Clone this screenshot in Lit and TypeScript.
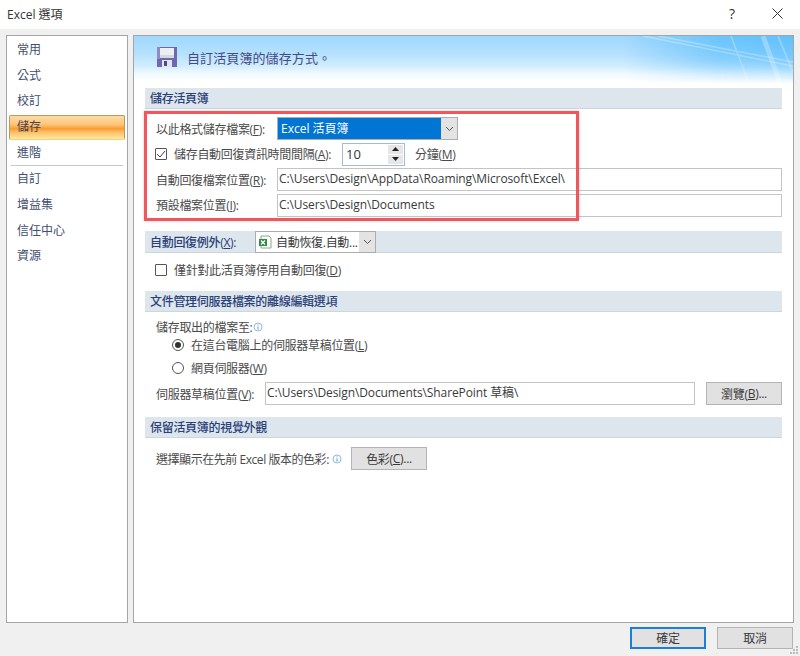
import { LitElement, html, css, svg } from 'lit'
import { customElement } from 'lit/decorators.js'

const NAV_TOP = ['常用', '公式', '校訂', '儲存', '進階']
const NAV_BOTTOM = ['自訂', '增益集', '信任中心', '資源']

const chevron = html`<svg width="9" height="6" viewBox="0 0 9 6"><path d="M1 1l3.5 3.5L8 1" fill="none" stroke="#555" stroke-width="1"/></svg>`

const info = html`<svg class="info" width="10" height="10" viewBox="0 0 10 10"><circle cx="5" cy="5" r="4" fill="#fff" stroke="#8dbbe6"/><path d="M5 2.5v1M5 4.5v3" stroke="#5a97d0" stroke-width="1"/></svg>`

@customElement('app-root')
export class AppRoot extends LitElement {
  static styles = css`
    :host {
      display: block;
      position: relative;
      width: 800px;
      height: 656px;
      background: #f0f0f0;
      color: #4a4a4a;
      font-family: 'Open Sans', 'Noto Sans CJK TC', sans-serif;
      font-size: 12px;
      letter-spacing: -0.3px;
      overflow: hidden;
    }
    u { text-underline-offset: 1px; }
    .titlebar {
      height: 29px;
      background: #fff;
      display: flex;
      align-items: center;
      padding: 0 17px 2px 7px;
      box-sizing: border-box;
      color: #333;
      letter-spacing: 0;
    }
    .titlebar .name { flex: 1; }
    .help { font-size: 14px; width: 20px; margin-right: 30px; text-align: center; color: #333; }
    .body {
      display: flex;
      gap: 5px;
      padding: 6px 6px 0;
      height: 594px;
      box-sizing: border-box;
    }
    .nav {
      width: 122px;
      box-sizing: border-box;
      background: #fff;
      border: 1px solid #a5a5a5;
      padding: 1px 2px;
      color: #414e70;
      letter-spacing: 0;
    }
    .nav-item {
      height: 25.6px;
      line-height: 25px;
      padding-left: 8px;
    }
    .nav-item.on {
      background: linear-gradient(#fbdca8 0, #fdc477 38%, #fb9c30 55%, #fdc26c 72%, #fee9a0 100%);
      border: 1px solid #bd9a5c;
      border-bottom-color: #f2d272;
      height: 23px;
      line-height: 22px;
      padding-left: 7px;
      margin: 1px 0 0;
      color: #44434f;
      border-radius: 2px;
    }
    .nav hr {
      border: 0;
      border-top: 1px solid #c3c7cc;
      margin: 0 2px;
    }
    .panel {
      position: relative;
      width: 661px;
      box-sizing: border-box;
      border: 1px solid #a5a5a5;
      background: linear-gradient(#9fd8fd 0, #b5e1fd 18px, #d2edfe 30px, #f2faff 38px, #fff 46px);
      padding: 0 11px;
    }
    .banner-art { position: absolute; right: 0; top: 0; }
    .banner {
      position: relative;
      display: flex;
      align-items: center;
      gap: 10px;
      height: 52px;
      padding: 0 0 10px 12px;
      box-sizing: border-box;
      font-size: 13px;
      color: #454b82;
      letter-spacing: 0.1px;
    }
    .head {
      position: relative;
      height: 21px;
      box-sizing: border-box;
      background: #dde6ec;
      border-bottom: 1px solid #ccd6dd;
      padding-left: 5px;
      display: flex;
      align-items: center;
      gap: 10px;
      font-weight: 500;
      color: #2b3f78;
    }
    .head.tall { height: 22px; }
    .row {
      display: flex;
      align-items: center;
      height: 25.5px;
      padding-left: 11px;
    }
    .label { width: 121px; flex: none; }
    .field {
      flex: 1;
      height: 23px;
      box-sizing: border-box;
      background: #fff;
      border: 1px solid #c4c4c4;
      padding-left: 1px;
      line-height: 20px;
      white-space: nowrap;
      color: #3a3a3a;
      letter-spacing: -0.1px;
    }
    .select {
      display: flex;
      width: 181px;
      height: 23px;
      box-sizing: border-box;
      border: 1px solid #adadad;
      background: #e3e3e3;
    }
    .select .value {
      flex: 1;
      background: #0075d4;
      color: #fff;
      padding-left: 3px;
      line-height: 22px;
      letter-spacing: 0;
    }
    .select .arrow, .combo .arrow {
      width: 16px;
      display: flex;
      align-items: center;
      justify-content: center;
    }
    .check {
      width: 12px;
      height: 12px;
      box-sizing: border-box;
      flex: none;
      border: 1px solid #555;
      margin: 0 7px 0 -1px;
      background: #fff;
      display: flex;
      border-radius: 1px;
    }
    .spin {
      display: flex;
      width: 63px;
      height: 23px;
      box-sizing: border-box;
      border: 1px solid #a3bcd4;
      background: #fff;
      margin-right: 10px;
      font-size: 13px;
      color: #333;
      padding: 1px 1px 1px 3px;
      letter-spacing: 0;
    }
    .spin .num { flex: 1; line-height: 18px; }
    .spin .btns { width: 15px; display: flex; flex-direction: column; gap: 1px; }
    .spin .btns span {
      flex: 1;
      background: #e6e6e6;
      display: flex;
      align-items: center;
      justify-content: center;
    }
    .combo {
      display: flex;
      width: 121px;
      height: 22px;
      box-sizing: border-box;
      border: 1px solid #adadad;
      background: #e3e3e3;
      font-weight: 400;
      color: #3a3a3a;
    }
    .combo .value {
      flex: 1;
      background: #fff;
      display: flex;
      align-items: center;
      gap: 4px;
      padding-left: 2px;
      white-space: nowrap;
    }
    .radio {
      width: 12px;
      height: 12px;
      box-sizing: border-box;
      flex: none;
      border: 1px solid #555;
      border-radius: 50%;
      margin: 0 7px 0 16px;
      padding: 2px;
      background-clip: content-box;
    }
    .radio.on { background-color: #333; }
    .btn {
      width: 76px;
      height: 23px;
      box-sizing: border-box;
      border: 1px solid #b4b4b4;
      background: #e1e1e1;
      color: #3a3a3a;
      display: flex;
      align-items: center;
      justify-content: center;
      flex: none;
    }
    .info { margin-left: 1px; flex: none; }
    .colour-label {
      width: 175px;
      flex: none;
      white-space: nowrap;
      letter-spacing: -0.45px;
    }
    .callout {
      position: absolute;
      left: 10px;
      top: 75px;
      width: 435px;
      height: 110px;
      box-sizing: border-box;
      border: 3px solid #f0565c;
      box-shadow: 0 0 3px rgba(0, 0, 0, 0.2);
      pointer-events: none;
    }
    .footer {
      display: flex;
      justify-content: flex-end;
      gap: 11px;
      padding: 4px 7px 0 0;
    }
    .footer .btn { height: 22px; width: 76px; }
    .footer .btn.default { border: 2px solid #1b7fd6; }
    .grip { position: absolute; right: 1px; bottom: 1px; }
  `

  private bannerArt() {
    return svg`
      <svg class="banner-art" width="170" height="60" viewBox="0 0 170 60">
        <defs>
          <linearGradient id="across" x1="0" y1="0" x2="1" y2="0">
            <stop offset="0" stop-color="#62c0fc" stop-opacity="0"/>
            <stop offset="0.55" stop-color="#62c0fc" stop-opacity=".85"/>
            <stop offset="1" stop-color="#62c0fc"/>
          </linearGradient>
          <linearGradient id="down" x1="0" y1="0" x2="0" y2="1">
            <stop offset="0" stop-color="#fff"/>
            <stop offset="0.4" stop-color="#fff" stop-opacity=".7"/>
            <stop offset="0.8" stop-color="#fff" stop-opacity="0"/>
          </linearGradient>
          <mask id="fade"><rect width="170" height="60" fill="url(#down)"/></mask>
        </defs>
        <g mask="url(#fade)">
          <rect width="170" height="60" fill="url(#across)"/>
          <path d="M20 0L170 30M35 0L170 26M108 0L125 45" stroke="#fff" stroke-opacity=".3" stroke-width="1.5" fill="none"/>
          <path d="M140 0L158 50" stroke="#fff" stroke-opacity=".3" stroke-width="5" fill="none"/>
          <path d="M155 0L170 36" stroke="#fff" stroke-opacity=".25" stroke-width="2" fill="none"/>
        </g>
      </svg>`
  }

  private floppy() {
    return svg`
      <svg width="20" height="20" viewBox="0 0 20 20" style="flex:none">
        <path d="M0 0h20v20H0z" fill="#6f68ae"/>
        <path d="M0 0h3v12H0z" fill="#8f89c6"/>
        <path d="M3 1h14v10H3z" fill="#eeeef2"/>
        <path d="M3 8h14v3H3z" fill="#d5d8e2"/>
        <path d="M5 13h10v7H5z" fill="#e4e4ee"/>
        <path d="M7 14h3v5H7z" fill="#4f4a86"/>
      </svg>`
  }

  private xls() {
    return svg`
      <svg width="14" height="14" viewBox="0 0 14 14" style="flex:none">
        <path d="M3 1h8l2 2v10H3z" fill="#fff" stroke="#8aa88a"/>
        <path d="M1 4h8v7H1z" fill="#2e8b45"/>
        <path d="M3 5.5l4 4M7 5.5l-4 4" stroke="#fff" stroke-width="1.2"/>
      </svg>`
  }

  private navItem(t: string) {
    return html`<div class="nav-item ${t === '儲存' ? 'on' : ''}">${t}</div>`
  }

  render() {
    return html`
      <div class="titlebar">
        <span class="name">Excel 選項</span>
        <span class="help">?</span>
        <svg width="11" height="11" viewBox="0 0 11 11"><path d="M.5.5l10 10M10.5.5l-10 10" stroke="#333" fill="none"/></svg>
      </div>
      <div class="body">
        <div class="nav">
          ${NAV_TOP.map(t => this.navItem(t))}
          <hr />
          ${NAV_BOTTOM.map(t => this.navItem(t))}
        </div>
        <div class="panel">
          ${this.bannerArt()}
          <div class="banner">${this.floppy()}<span>自訂活頁簿的儲存方式。</span></div>

          <div class="head">儲存活頁簿</div>
          <div class="row" style="margin-top:7px">
            <span class="label">以此格式儲存檔案(<u>F</u>):</span>
            <div class="select"><span class="value">Excel 活頁簿</span><span class="arrow">${chevron}</span></div>
          </div>
          <div class="row">
            <span class="check"><svg width="10" height="10" viewBox="0 0 10 10"><path d="M1 5l3 3 5-6" fill="none" stroke="#444"/></svg></span>
            <span style="width:168px;flex:none">儲存自動回復資訊時間間隔(<u>A</u>):</span>
            <div class="spin">
              <span class="num">10</span>
              <span class="btns">
                <span><svg width="7" height="4" viewBox="0 0 7 4"><path d="M3.5 0L7 4H0z" fill="#222"/></svg></span>
                <span><svg width="7" height="4" viewBox="0 0 7 4"><path d="M0 0h7L3.5 4z" fill="#222"/></svg></span>
              </span>
            </div>
            <span>分鐘(<u>M</u>)</span>
          </div>
          <div class="row"><span class="label">自動回復檔案位置(<u>R</u>):</span><div class="field">C:\\Users\\Design\\AppData\\Roaming\\Microsoft\\Excel\\</div></div>
          <div class="row"><span class="label">預設檔案位置(<u>I</u>):</span><div class="field">C:\\Users\\Design\\Documents</div></div>

          <div class="head tall" style="margin-top:13px">
            <span style="width:95px;flex:none">自動回復例外(<u>X</u>):</span>
            <div class="combo"><span class="value">${this.xls()}自動恢復.自動...</span><span class="arrow">${chevron}</span></div>
          </div>
          <div class="row" style="margin-top:4px">
            <span class="check"></span><span>僅針對此活頁簿停用自動回復(<u>D</u>)</span>
          </div>

          <div class="head" style="margin-top:8.5px">文件管理伺服器檔案的離線編輯選項</div>
          <div class="row" style="margin-top:6px;height:18px"><span>儲存取出的檔案至:</span>${info}</div>
          <div class="row" style="height:18px"><span class="radio on"></span><span>在這台電腦上的伺服器草稿位置(<u>L</u>)</span></div>
          <div class="row" style="height:28px"><span class="radio"></span><span>網頁伺服器(<u>W</u>)</span></div>
          <div class="row" style="height:23px">
            <span style="width:109px;flex:none">伺服器草稿位置(<u>V</u>):</span>
            <div class="field" style="margin-right:11px">C:\\Users\\Design\\Documents\\SharePoint 草稿\\</div>
            <div class="btn">瀏覽(<u>B</u>)...</div>
          </div>

          <div class="head" style="margin-top:12px">保留活頁簿的視覺外觀</div>
          <div class="row" style="margin-top:9px;height:23px">
            <span class="colour-label">選擇顯示在先前 Excel 版本的色彩:</span>${info}
            <div class="btn" style="margin-left:9px">色彩(<u>C</u>)...</div>
          </div>

          <div class="callout"></div>
        </div>
      </div>
      <div class="footer">
        <div class="btn default">確定</div>
        <div class="btn">取消</div>
      </div>
      <svg class="grip" width="10" height="10" viewBox="0 0 10 10"><path d="M7 1h2v2H7zM4 4h2v2H4zM7 4h2v2H7zM1 7h2v2H1zM4 7h2v2H4zM7 7h2v2H7z" fill="#bbb"/></svg>
    `
  }
}
